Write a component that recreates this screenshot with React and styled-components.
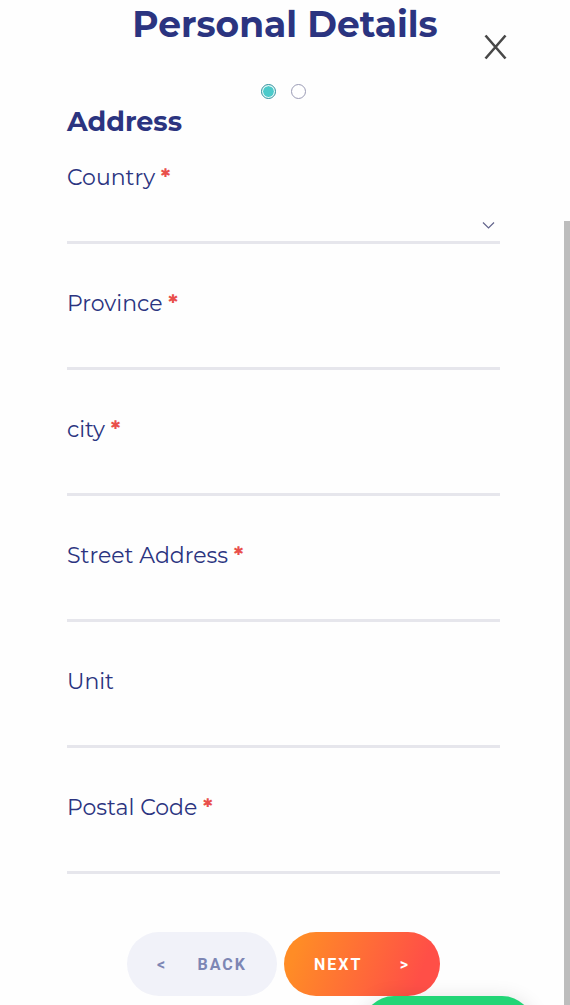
import React, { useState } from "react";
import styled, { createGlobalStyle } from "styled-components";

const GlobalStyle = createGlobalStyle`
  * { box-sizing: border-box; }
  body {
    margin: 0;
    background: #fefefe;
    color: #2b3480;
    font-family: Montserrat, Inter, sans-serif;
  }
`;

const Page = styled.main`
  padding-bottom: 8px;
`;

const Header = styled.header`
  display: grid;
  grid-template-columns: 1fr auto 1fr;
  padding: 0 62px;
  min-height: 60px;
`;

const Title = styled.h1`
  grid-column: 2;
  margin: 0;
  font-size: 36px;
  line-height: 48px;
  font-weight: 700;
  white-space: nowrap;
`;

const CloseButton = styled.button`
  justify-self: end;
  align-self: end;
  display: flex;
  padding: 0;
  border: 0;
  background: none;
  color: #484848;
  cursor: pointer;
`;

const Form = styled.form`
  padding: 24px 70px 0 67px;
`;

const Steps = styled.div`
  display: flex;
  justify-content: center;
  gap: 15px;
  height: 22px;
`;

const StepDot = styled.input`
  appearance: none;
  width: 15px;
  height: 15px;
  margin: 0;
  border: 1px solid #9a9bb5;
  border-radius: 50%;
  background: #fff;

  &:checked {
    padding: 1px;
    border-color: #2b8f9c;
    background: #4ccaca content-box;
    box-shadow: inset 0 0 0 1px #dcf8f6;
  }
`;

const SectionTitle = styled.h2`
  margin: 0 0 24px;
  font-size: 27px;
  line-height: 32px;
  font-weight: 700;
`;

const Field = styled.div`
  display: flex;
  flex-direction: column;
  margin-bottom: 44px;
`;

const Label = styled.label`
  font-size: 22px;
  line-height: 32px;
`;

const Required = styled.span`
  color: #e94f4b;
  font-weight: 700;
`;

const Control = styled.input`
  width: 100%;
  height: 50px;
  padding: 12px 0 0;
  border: 0;
  border-bottom: 3px solid #e6e6ec;
  border-radius: 0;
  outline: 0;
  appearance: none;
  background: transparent;
  color: inherit;
  font: inherit;
  font-size: 22px;

  &:focus-visible { border-bottom-color: #4ccaca; }
`;

const SelectWrap = styled.div`
  display: grid;
  align-items: center;

  & > * { grid-area: 1 / 1; }
`;

const Chevron = styled.svg`
  justify-self: end;
  margin: 12px 5px 0 0;
  pointer-events: none;
`;

const Actions = styled.div`
  display: flex;
  justify-content: center;
  gap: 7px;
  padding-top: 14px;
`;

const PillButton = styled.button`
  display: flex;
  align-items: center;
  justify-content: space-between;
  width: ${(p) => (p.$primary ? 156 : 150)}px;
  height: 64px;
  padding: 0 30px;
  border: 0;
  border-radius: 32px;
  background: ${(p) =>
    p.$primary ? "linear-gradient(110deg, #ff8c26 10%, #ff4f47 85%)" : "#f1f2f9"};
  color: ${(p) => (p.$primary ? "#fff" : "#7d86b4")};
  font-family: Roboto, sans-serif;
  font-size: 16px;
  font-weight: 700;
  letter-spacing: 2px;
  cursor: pointer;
`;

const ChatButton = styled.button`
  position: fixed;
  right: 36px;
  bottom: -55px;
  width: 172px;
  height: 64px;
  border: 0;
  border-radius: 40px;
  background: #22d576;
  box-shadow: 0 2px 20px rgba(0, 0, 0, 0.12);
`;

const ScrollThumb = styled.div`
  position: fixed;
  top: 221px;
  right: 0;
  bottom: 0;
  width: 6px;
  background: #bdbdbd;
`;

const fields = [
  { id: "country", label: "Country", required: true, select: true },
  { id: "province", label: "Province", required: true },
  { id: "city", label: "city", required: true },
  { id: "street", label: "Street Address", required: true },
  { id: "unit", label: "Unit" },
  { id: "postal", label: "Postal Code", required: true },
];

function FormField({ id, label, required, select }) {
  return (
    <Field>
      <Label htmlFor={id}>
        {label} {required && <Required>*</Required>}
      </Label>
      {select ? (
        <SelectWrap>
          <Control as="select" id={id} name={id} required={required}>
            <option value="" />
          </Control>
          <Chevron width="13" height="9" viewBox="0 0 13 9" aria-hidden="true">
            <path d="M1 1.5 6.5 7 12 1.5" fill="none" stroke="#62648c" strokeWidth="1.2" />
          </Chevron>
        </SelectWrap>
      ) : (
        <Control type="text" id={id} name={id} required={required} />
      )}
    </Field>
  );
}

export default function App() {
  const [step, setStep] = useState(0);
  return (
    <Page>
      <GlobalStyle />
      <Header>
        <Title>Personal Details</Title>
        <CloseButton type="button" aria-label="Close">
          <svg width="25" height="26" viewBox="0 0 25 26" aria-hidden="true">
            <path d="M2.5 1.5 22.5 24.5M22.5 1.5 2.5 24.5" stroke="currentColor" strokeWidth="2.6" />
          </svg>
        </CloseButton>
      </Header>
      <Form onSubmit={(e) => e.preventDefault()}>
        <Steps role="radiogroup" aria-label="Step">
          {[0, 1].map((n) => (
            <StepDot
              key={n}
              type="radio"
              name="step"
              aria-label={`Step ${n + 1}`}
              checked={step === n}
              onChange={() => setStep(n)}
            />
          ))}
        </Steps>
        <SectionTitle>Address</SectionTitle>
        {fields.map((f) => (
          <FormField key={f.id} {...f} />
        ))}
        <Actions>
          <PillButton type="button">
            <span>&lt;</span>
            <span>BACK</span>
          </PillButton>
          <PillButton type="submit" $primary>
            <span>NEXT</span>
            <span>&gt;</span>
          </PillButton>
        </Actions>
      </Form>
      <ChatButton type="button" aria-label="Chat" />
      <ScrollThumb />
    </Page>
  );
}
